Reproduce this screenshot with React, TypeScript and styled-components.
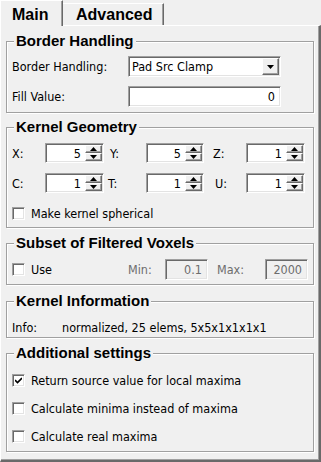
import React from 'react';
import styled, { createGlobalStyle, css } from 'styled-components';

const Global = createGlobalStyle`
  html, body { margin: 0; padding: 0; background: #f0f0f0; }
  body {
    width: 321px; height: 462px; overflow: hidden;
    font-family: "DejaVu Sans Condensed", "DejaVu Sans", sans-serif;
    font-size: 12.5px; color: #000;
  }
`;

const sunken = css`
  border-style: solid;
  border-width: 1px;
  border-color: #a0a0a0 #fff #fff #a0a0a0;
  box-shadow: inset 1px 1px 0 #696969, inset -1px -1px 0 #e3e3e3;
`;

const raised = css`
  border-style: solid;
  border-width: 1px;
  border-color: #fff #696969 #696969 #fff;
  box-shadow: inset -1px -1px 0 #a0a0a0;
`;

const Root = styled.div`
  width: 321px;
  height: 462px;
  display: flex;
  flex-direction: column;
  background: #f0f0f0;
`;

const TabBar = styled.div`
  display: flex;
  align-items: flex-end;
  height: 25px;
  flex: none;
`;

const Tab = styled.div<{ $active?: boolean }>`
  box-sizing: border-box;
  font: bold 16px/18px "Liberation Sans", Arial, sans-serif;
  background: #f0f0f0;
  border-top: 1px solid #fff;
  border-right: 1px solid #696969;
  box-shadow: inset -1px 0 0 #a0a0a0;
  ${p => p.$active ? css`
    width: 63px;
    height: 26px;
    margin-bottom: -1px;
    padding: 5px 0 0 11px;
    border-left: 1px solid #fff;
    position: relative;
    z-index: 1;
  ` : css`
    width: 101px;
    height: 22px;
    padding: 2px 0 0 13px;
  `}
`;

const Pane = styled.div`
  flex: 1;
  box-sizing: border-box;
  border-top: 1px solid #fff;
  border-left: 1px solid #fff;
  border-right: 2px solid #696969;
  border-bottom: 2px solid #696969;
  box-shadow: inset -1px -1px 0 #a0a0a0;
  padding: 15px 5px 0 5px;
  display: flex;
  flex-direction: column;
`;

const Group = styled.div<{ $mt: number; $pt: number; $pb: number; $gap?: number }>`
  position: relative;
  margin-top: ${p => p.$mt}px;
  border: 1px solid #a0a0a0;
  box-shadow: inset 1px 1px 0 #fff, 1px 1px 0 #fff;
  padding: ${p => p.$pt}px 5px ${p => p.$pb}px 5px;
  display: flex;
  flex-direction: column;
  gap: ${p => p.$gap ?? 0}px;
`;

const Title = styled.div`
  position: absolute;
  top: -10px;
  left: 7px;
  padding: 0 2px;
  background: #f0f0f0;
  font: bold 15px/17px "Liberation Sans", Arial, sans-serif;
`;

const Row = styled.div<{ $h: number }>`
  display: flex;
  align-items: center;
  height: ${p => p.$h}px;
`;

const Label = styled.span<{ $w?: number; $pl?: number; $disabled?: boolean }>`
  flex: none;
  box-sizing: border-box;
  width: ${p => (p.$w ? `${p.$w}px` : 'auto')};
  padding-left: ${p => p.$pl ?? 0}px;
  color: ${p => (p.$disabled ? '#6d6d6d' : '#000')};
  white-space: nowrap;
`;

const Field = styled.div<{ $w: number; $h: number; $disabled?: boolean }>`
  flex: none;
  box-sizing: border-box;
  width: ${p => p.$w}px;
  height: ${p => p.$h}px;
  ${sunken};
  background: ${p => (p.$disabled ? '#f0f0f0' : '#fff')};
  color: ${p => (p.$disabled ? '#6d6d6d' : '#000')};
  display: flex;
  align-items: center;
  justify-content: flex-end;
  padding: 0 5px 0 0;
`;

const Combo = styled.div`
  flex: none;
  box-sizing: border-box;
  width: 153px;
  height: 21px;
  ${sunken};
  background: #fff;
  display: flex;
  align-items: center;
  padding: 1px 1px 1px 3px;
`;

const ComboText = styled.span`
  flex: 1;
  white-space: nowrap;
`;

const ArrowButton = styled.div<{ $w: number; $h: number }>`
  flex: none;
  box-sizing: border-box;
  width: ${p => p.$w}px;
  height: ${p => p.$h}px;
  ${raised};
  background: #f0f0f0;
  display: flex;
  align-items: center;
  justify-content: center;
`;

const SpinBox = styled.div`
  box-sizing: border-box;
  width: 100%;
  height: 20px;
  ${sunken};
  background: #fff;
  display: flex;
  align-items: center;
  padding: 1px;
`;

const SpinValue = styled.span`
  flex: 1;
  text-align: right;
  padding-right: 4px;
`;

const SpinButtons = styled.div`
  flex: none;
  display: flex;
  flex-direction: column;
`;

const Grid = styled.div`
  display: grid;
  grid-template-columns: 33px 59px 42px 58px 42px 59px;
  grid-auto-rows: 20px;
  row-gap: 10px;
  align-items: center;
`;

const Check = styled.label<{ $w?: number }>`
  flex: none;
  display: flex;
  align-items: center;
  gap: 6px;
  width: ${p => (p.$w ? `${p.$w}px` : 'auto')};
  white-space: nowrap;
`;

const Box = styled.span`
  box-sizing: border-box;
  width: 13px;
  height: 13px;
  ${sunken};
  background: #fff;
  display: flex;
  align-items: center;
  justify-content: center;
`;

const Arrow = ({ up }: { up?: boolean }) => (
  <svg width="7" height="4" viewBox="0 0 7 4">
    <path d={up ? 'M3.5 0 L7 4 L0 4 Z' : 'M0 0 L7 0 L3.5 4 Z'} fill="#000" />
  </svg>
);

const CheckBox = ({ checked, label, w }: { checked?: boolean; label: string; w?: number }) => (
  <Check $w={w}>
    <Box>
      {checked && (
        <svg width="7" height="7" viewBox="0 0 7 7">
          <path d="M0 3 L2.5 5.5 L7 1" stroke="#000" strokeWidth="1.6" fill="none" />
        </svg>
      )}
    </Box>
    {label}
  </Check>
);

const Spin = ({ value }: { value: string }) => (
  <SpinBox>
    <SpinValue>{value}</SpinValue>
    <SpinButtons>
      <ArrowButton $w={17} $h={8}><Arrow up /></ArrowButton>
      <ArrowButton $w={17} $h={8}><Arrow /></ArrowButton>
    </SpinButtons>
  </SpinBox>
);

export default function App() {
  return (
    <Root>
      <Global />
      <TabBar>
        <Tab $active>Main</Tab>
        <Tab>Advanced</Tab>
      </TabBar>
      <Pane>
        <Group $mt={0} $pt={14} $pb={5} $gap={9}>
          <Title>Border Handling</Title>
          <Row $h={21}>
            <Label $w={116}>Border Handling:</Label>
            <Combo>
              <ComboText>Pad Src Clamp</ComboText>
              <ArrowButton $w={17} $h={17}><Arrow /></ArrowButton>
            </Combo>
          </Row>
          <Row $h={21}>
            <Label $w={116}>Fill Value:</Label>
            <Field $w={153} $h={21}>0</Field>
          </Row>
        </Group>

        <Group $mt={14} $pt={15} $pb={4} $gap={10}>
          <Title>Kernel Geometry</Title>
          <Grid>
            <Label>X:</Label>
            <Spin value="5" />
            <Label $pl={6}>Y:</Label>
            <Spin value="5" />
            <Label $pl={9}>Z:</Label>
            <Spin value="1" />
            <Label>C:</Label>
            <Spin value="1" />
            <Label $pl={4}>T:</Label>
            <Spin value="1" />
            <Label $pl={11}>U:</Label>
            <Spin value="1" />
          </Grid>
          <Row $h={20}>
            <CheckBox label="Make kernel spherical" />
          </Row>
        </Group>

        <Group $mt={15} $pt={15} $pb={4}>
          <Title>Subset of Filtered Voxels</Title>
          <Row $h={21}>
            <CheckBox label="Use" w={116} />
            <Label $w={37} $disabled>Min:</Label>
            <Field $w={43} $h={21} $disabled>0.1</Field>
            <Label $w={57} $pl={9} $disabled>Max:</Label>
            <Field $w={43} $h={21} $disabled>2000</Field>
          </Row>
        </Group>

        <Group $mt={16} $pt={16} $pb={1}>
          <Title>Kernel Information</Title>
          <Row $h={18}>
            <Label $w={50}>Info:</Label>
            <Label>normalized, 25 elems, 5x5x1x1x1x1</Label>
          </Row>
        </Group>

        <Group $mt={15} $pt={16} $pb={5} $gap={8}>
          <Title>Additional settings</Title>
          <Row $h={20}>
            <CheckBox checked label="Return source value for local maxima" />
          </Row>
          <Row $h={20}>
            <CheckBox label="Calculate minima instead of maxima" />
          </Row>
          <Row $h={20}>
            <CheckBox label="Calculate real maxima" />
          </Row>
        </Group>
      </Pane>
    </Root>
  );
}
